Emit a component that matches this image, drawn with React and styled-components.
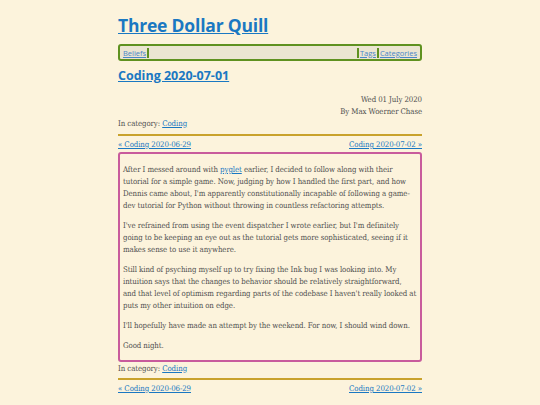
import React from "react";
import styled, { createGlobalStyle } from "styled-components";

const Global = createGlobalStyle`
  html, body {
    margin: 0;
    padding: 0;
    background: #fcf3dc;
  }
`;

const Page = styled.div`
  width: 304px;
  margin: 0 auto;
  padding-top: 14px;
  font-family: "DejaVu Serif Condensed", "DejaVu Serif", serif;
  font-stretch: condensed;
  color: #505050;
  font-size: 7.8px;
  letter-spacing: -0.08px;
  line-height: 12px;
`;

const Link = styled.a`
  color: #1a78c2;
  text-decoration: underline;
`;

const SiteTitle = styled.h1`
  margin: 0;
  font-family: "Open Sans", sans-serif;
  font-stretch: normal;
  font-weight: 700;
  font-size: 17.5px;
  line-height: 22px;
  letter-spacing: -0.2px;
  a { color: #1a78c2; }
`;

const Nav = styled.nav`
  display: flex;
  align-items: center;
  margin-top: 8px;
  height: 13px;
  border: 2px solid #5f9120;
  border-radius: 3px;
  background: #ebe5d1;
  padding: 0 2px;
  font-family: "Open Sans", sans-serif;
  font-stretch: normal;
  font-size: 7.5px;
  letter-spacing: 0;
  line-height: 10px;
`;

const NavItem = styled.span`
  padding: 0 1px;
  border-left: ${(p) => (p.$sepLeft ? "2px solid #5f9120" : "none")};
  border-right: ${(p) => (p.$sepRight ? "2px solid #5f9120" : "none")};
  a { color: #4a86c8; }
`;

const Spacer = styled.span`
  flex: 1;
`;

const PostTitle = styled.h2`
  margin: 7px 0 0;
  font-family: "Open Sans", sans-serif;
  font-stretch: normal;
  font-weight: 700;
  font-size: 12.5px;
  letter-spacing: 0;
  line-height: 16px;
  a { color: #1a78c2; }
`;

const Meta = styled.div`
  margin-top: 10px;
  text-align: right;
`;

const Category = styled.div``;

const Rule = styled.hr`
  margin: 4px 0 3px;
  border: none;
  height: 2px;
  background: #c9a22c;
`;

const PrevNext = styled.div`
  display: flex;
  justify-content: space-between;
`;

const Body = styled.article`
  margin-top: 1px;
  border: 2px solid #c85b9c;
  border-radius: 3px;
  padding: 10px 1px 0 3px;
  p { margin: 0 0 8px; }
`;

const Footer = styled.div`
  margin-top: 1px;
  margin-bottom: -1px;
`;

function Links() {
  return (
    <PrevNext>
      <Link href="#">« Coding 2020-06-29</Link>
      <Link href="#">Coding 2020-07-02 »</Link>
    </PrevNext>
  );
}

export default function App() {
  return (
    <>
      <Global />
      <Page>
        <SiteTitle><a href="#">Three Dollar Quill</a></SiteTitle>
        <Nav>
          <NavItem $sepRight><a href="#">Beliefs</a></NavItem>
          <Spacer />
          <NavItem $sepLeft><a href="#">Tags</a></NavItem>
          <NavItem $sepLeft><a href="#">Categories</a></NavItem>
        </Nav>
        <PostTitle><a href="#">Coding 2020-07-01</a></PostTitle>
        <Meta>
          <div>Wed 01 July 2020</div>
          <div>By Max Woerner Chase</div>
        </Meta>
        <Category>In category: <Link href="#">Coding</Link></Category>
        <Rule />
        <Links />
        <Body>
          <p>After I messed around with <Link href="#">pyglet</Link> earlier, I decided to follow along with their tutorial for a simple game. Now, judging by how I handled the first part, and how Dennis came about, I'm apparently constitutionally incapable of following a game-dev tutorial for Python without throwing in countless refactoring attempts.</p>
          <p>I've refrained from using the event dispatcher I wrote earlier, but I'm definitely going to be keeping an eye out as the tutorial gets more sophisticated, seeing if it makes sense to use it anywhere.</p>
          <p>Still kind of psyching myself up to try fixing the Ink bug I was looking into. My intuition says that the changes to behavior should be relatively straightforward,<br />and that level of optimism regarding parts of the codebase I haven't really looked at puts my other intuition on edge.</p>
          <p>I'll hopefully have made an attempt by the weekend. For now, I should wind down.</p>
          <p>Good night.</p>
        </Body>
        <Footer>In category: <Link href="#">Coding</Link></Footer>
        <Rule />
        <Links />
      </Page>
    </>
  );
}
